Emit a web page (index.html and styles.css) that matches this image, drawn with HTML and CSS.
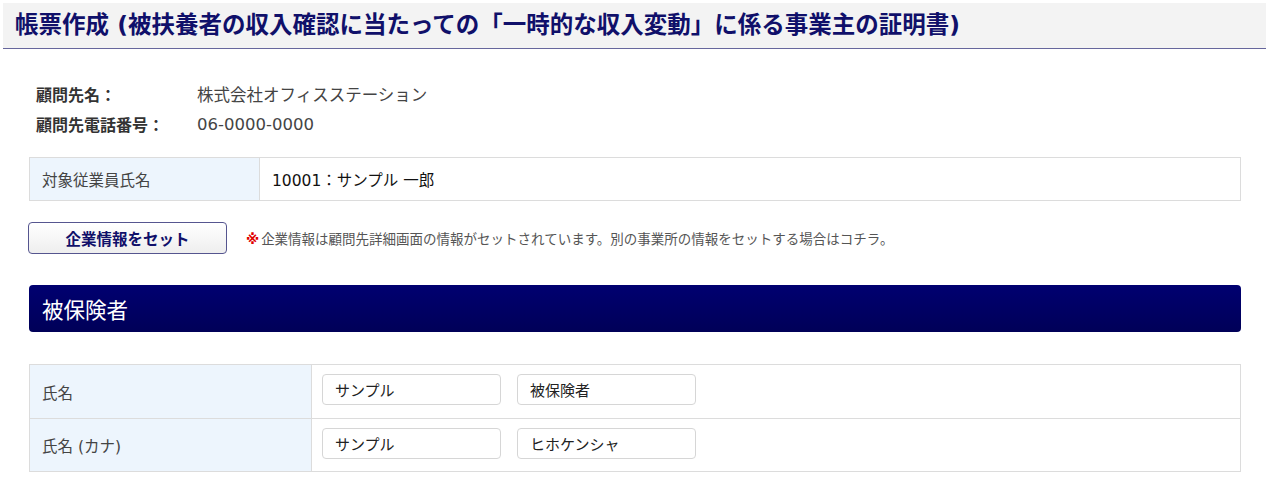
FILE: index.html
```html
<!DOCTYPE html>
<html lang="ja">
<head>
<meta charset="utf-8">
<title>帳票作成</title>
<link rel="stylesheet" href="styles.css">
</head>
<body>
<header class="page-header">
  <h1 class="page-title">帳票作成 (被扶養者の収入確認に当たっての「一時的な収入変動」に係る事業主の証明書)</h1>
</header>
<main class="content">
  <dl class="client-info">
    <div class="info-row"><dt>顧問先名：</dt><dd>株式会社オフィスステーション</dd></div>
    <div class="info-row"><dt>顧問先電話番号：</dt><dd>06-0000-0000</dd></div>
  </dl>

  <div class="grid-table emp-table">
    <div class="cell label">対象従業員氏名</div>
    <div class="cell value">10001：サンプル 一郎</div>
  </div>

  <div class="action-row">
    <button class="set-btn" type="button">企業情報をセット</button>
    <p class="note"><span class="mark">※</span>企業情報は顧問先詳細画面の情報がセットされています。別の事業所の情報をセットする場合はコチラ。</p>
  </div>

  <h2 class="section-title">被保険者</h2>

  <div class="grid-table person-table">
    <div class="cell label">氏名</div>
    <div class="cell inputs">
      <input class="text-input" type="text" value="サンプル">
      <input class="text-input" type="text" value="被保険者">
    </div>
    <div class="cell label">氏名 (カナ)</div>
    <div class="cell inputs">
      <input class="text-input" type="text" value="サンプル">
      <input class="text-input" type="text" value="ヒホケンシャ">
    </div>
  </div>
</main>
</body>
</html>
```

FILE: styles.css
```css
* { box-sizing: border-box; }
html, body { margin: 0; padding: 0; background: #fff; }
body {
  padding: 3px 0 0 3px;
  font-family: "DejaVu Sans", "Noto Sans CJK JP", sans-serif;
  color: #333;
}
.page-header {
  background: #f3f3f3;
  height: 46px;
  border-bottom: 1px solid #66669c;
  display: flex;
  align-items: center;
  padding-left: 12px;
}
.page-title {
  margin: 0;
  font-size: 23.5px;
  font-weight: bold;
  color: #10106a;
  line-height: 1;
  letter-spacing: 0;
}
.content {
  padding: 30px 25px 0 26px;
}
.client-info {
  margin: 0 0 18px 7px;
}
.info-row {
  display: flex;
  height: 30px;
  align-items: center;
}
.info-row dt {
  width: 161px;
  font-weight: bold;
  font-size: 16px;
  color: #333;
}
.info-row dd {
  margin: 0;
  font-size: 16.5px;
  color: #444;
}
.grid-table {
  display: grid;
  border: 1px solid #dcdcdc;
}
.emp-table {
  grid-template-columns: 230px 1fr;
  height: 44px;
}
.person-table {
  grid-template-columns: 282px 1fr;
}
.cell {
  display: flex;
  align-items: center;
  font-size: 15.5px;
}
.label {
  background: #edf5fd;
  border-right: 1px solid #dcdcdc;
  padding-left: 12px;
  color: #444;
}
.value {
  padding-left: 12px;
  color: #111;
}
.person-table .cell {
  height: 53px;
}
.person-table .cell:nth-child(n+3) {
  border-top: 1px solid #dcdcdc;
}
.inputs {
  padding: 9px 0 0 10px;
  gap: 16px;
  align-items: flex-start;
}
.text-input {
  width: 179px;
  height: 31px;
  border: 1px solid #d6d6d6;
  border-radius: 4px;
  padding: 0 12px;
  font-family: inherit;
  font-size: 15px;
  color: #222;
  background: #fff;
}
.action-row {
  display: flex;
  align-items: center;
  margin-top: 21px;
  gap: 19px;
}
.set-btn {
  width: 199px;
  height: 32px;
  border: 1px solid #55558f;
  border-radius: 4px;
  background: linear-gradient(#ffffff, #eeeeee);
  font-family: inherit;
  font-size: 15.5px;
  font-weight: bold;
  color: #10106a;
  margin-left: -1px;
}
.note {
  margin: 0;
  font-size: 13.5px;
  color: #555;
}
.mark {
  color: #e00000;
  font-weight: bold;
  margin-right: 2px;
}
.section-title {
  margin: 31px 0 32px;
  height: 47px;
  background: linear-gradient(#000070, #000058);
  border-radius: 4px;
  color: #fff;
  font-size: 21.5px;
  font-weight: normal;
  display: flex;
  align-items: center;
  padding-left: 13px;
}
```
